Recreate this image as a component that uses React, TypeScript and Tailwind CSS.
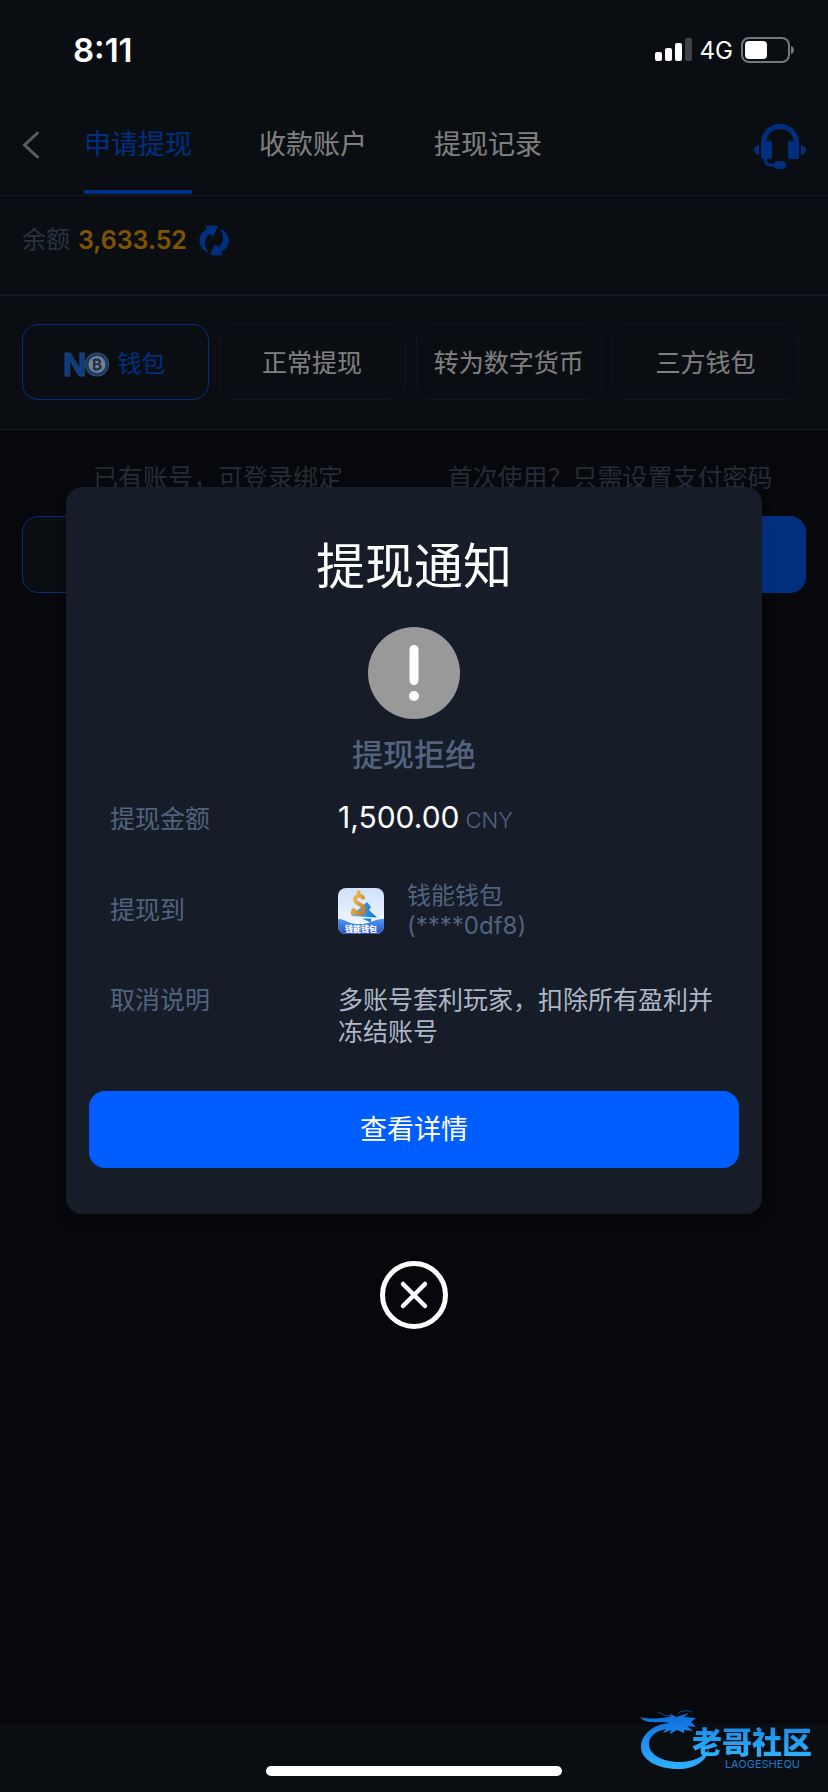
import React from 'react';
import { clsx } from 'clsx';

const tabs = ['申请提现', '收款账户', '提现记录'];
const methods = ['正常提现', '转为数字货币', '三方钱包'];

function StatusBar() {
  return (
    <div className="relative z-20 flex h-24 items-center justify-between pl-[73px] pr-[33px] pt-1 text-white">
      <span className="text-[33px] leading-10 font-semibold">8:11</span>
      <div className="flex items-center gap-2">
        <svg width="37" height="24" viewBox="0 0 37 24" fill="currentColor">
          <rect x="0" y="14" width="7" height="9" rx="2" />
          <rect x="10" y="10" width="7" height="13" rx="2" />
          <rect x="20" y="5" width="7" height="18" rx="2" />
          <rect x="30" y="0" width="7" height="23" rx="2" opacity="0.22" />
        </svg>
        <span className="pt-[2px] text-2xl">4G</span>
        <svg width="54" height="26" viewBox="0 0 54 26" fill="none">
          <rect x="1" y="1" width="47" height="24" rx="7" stroke="#74777a" strokeWidth="2" />
          <rect x="4" y="4" width="22" height="18" rx="4" fill="#fff" />
          <path d="M50 9c4 1 4 7 0 8z" fill="#74777a" />
        </svg>
      </div>
    </div>
  );
}

function HeadsetIcon() {
  return (
    <svg width="52" height="46" viewBox="0 0 52 46" fill="#005fff">
      <path
        d="M9.5 24V19.500C9.500 9.500 16.500 2.500 26 2.500S42.500 9.500 42.500 19.500V24"
        fill="none"
        stroke="#005fff"
        strokeWidth="5"
      />
      <path d="M7 19q0-2 2-2h7q2 0 2 2v14q0 2-2 2H9q-2 0-2-2zM34 19q0-2 2-2h7q2 0 2 2v14q0 2-2 2h-7q-2 0-2-2z" />
      <path d="M5 21v10C-1.500 30-1.500 22 5 21zM47 21v10c6.500-1 6.500-9 0-10z" />
      <path d="M11.500 34v2q0 5 5 5H24" fill="none" stroke="#005fff" strokeWidth="3" />
      <rect x="20" y="37" width="12" height="8" rx="4" />
    </svg>
  );
}

function RefreshIcon() {
  return (
    <svg width="30" height="31" viewBox="0 0 30 31" fill="#005fff">
      <path d="M6 .5 19 1l-5 11-3-3C5 13 4 20 9.500 27.500 2 25-1 18 1 11.500 2 8 4 6 8 4.500z" />
      <path d="M24 30.500 11 30l5-11 3 3C25 18 26 11 20.500 3.500 28 6 31 13 29 19.500 28 23 26 25 22 26.500z" />
    </svg>
  );
}

function NoLogo() {
  return (
    <svg width="44" height="25" viewBox="0 0 44 25" className="overflow-visible">
      <text x="-2" y="24" fontSize="31" className="font-bold" fill="#1a78ff" stroke="#4c8ad8" strokeWidth="0.800">
        N
      </text>
      <circle cx="32" cy="12.500" r="12" fill="#8fa4c0" />
      <circle cx="32" cy="12.500" r="9.800" fill="#fff" stroke="#1c78ee" strokeWidth="2.600" />
      <text x="32" y="18" fontSize="15" textAnchor="middle" className="font-bold" fill="#1c5fb0">
        ₿
      </text>
    </svg>
  );
}

function WalletLogo() {
  return (
    <svg width="46" height="46" viewBox="0 0 46 46" className="shrink-0 rounded-lg">
      <defs>
        <linearGradient id="sky" x1="0" y1="0" x2="0" y2="1">
          <stop offset="0" stopColor="#cfe2fb" />
          <stop offset="1" stopColor="#f8fbff" />
        </linearGradient>
        <linearGradient id="sea" x1="0" y1="0" x2="0" y2="1">
          <stop offset="0" stopColor="#4d9bf2" />
          <stop offset="1" stopColor="#2a50bd" />
        </linearGradient>
        <linearGradient id="gold" x1="0" y1="0" x2="1" y2="1">
          <stop offset="0" stopColor="#f3c469" />
          <stop offset="1" stopColor="#c9781a" />
        </linearGradient>
        <linearGradient id="sail" x1="0" y1="0" x2="1" y2="0">
          <stop offset="0" stopColor="#5cc0f7" />
          <stop offset="1" stopColor="#0d6fd6" />
        </linearGradient>
      </defs>
      <rect width="46" height="46" fill="url(#sky)" />
      <path d="M29 14 33 19 31 22 39 29.500 13 28z" fill="url(#sail)" />
      <path d="M24 30.500h9v4z" fill="#1e83dc" />
      <path
        d="M25 9.500c-3-3-8-2-8 2 0 5 9 4 9 10 0 5-7 5-10 1M20.500 4V7M14.500 25l1-3"
        fill="none"
        stroke="url(#gold)"
        strokeWidth="4"
        strokeLinecap="round"
      />
      <path d="M0 31c6-1 9 5 21 5s17-6 25-5v15H0z" fill="url(#sea)" />
      <text x="23" y="44" fontSize="8" textAnchor="middle" className="font-black" fill="#fff">
        钱能钱包
      </text>
    </svg>
  );
}

function Watermark() {
  return (
    <div className="absolute right-4 bottom-[22px] z-20 flex h-[62px] w-[172px] flex-col items-end justify-between">
      <svg width="172" height="62" viewBox="0 0 172 62" className="absolute inset-0">
        <defs>
          <linearGradient id="dragon" x1="0" y1="0" x2="0" y2="1">
            <stop offset="0" stopColor="#0b6cd8" />
            <stop offset="1" stopColor="#2fb0ff" />
          </linearGradient>
        </defs>
        <path
          d="M30 15C13 16 1 27 1 39c0 13 17 22 37 22 17 0 29-8 31-20-6 8-16 13-29 13-17 0-31-7-31-18 0-8 7-13 17-15l-3 4 8-3-1 4 7-4 7 3v-3l9 1-6-5 9 1-5-5 5-4-12-1 5-4-13 4-5-3-2 3c-7 1-17 3-29 0 4 5 12 6 23 5z"
          fill="url(#dragon)"
        />
        <path d="M18 4q6 5 14 4M38 5q6-4 14-1" stroke="#0a4a8c" strokeWidth="1" fill="none" />
      </svg>
      <span className="relative bg-linear-to-b from-[#1272d8] to-[#2fb4ff] bg-clip-text pt-[18px] text-[30px] leading-8 font-black text-transparent">
        老哥社区
      </span>
      <span className="relative pr-3 text-[11px] leading-3 text-[#1c78c8]">LAOGESHEQU</span>
    </div>
  );
}

function WithdrawNotice() {
  return (
    <div className="absolute inset-0 z-10 flex flex-col items-center justify-center bg-black/50 px-[66px] pt-6">
      <section
        role="dialog"
        aria-labelledby="notice-title"
        className="flex w-full flex-col items-center rounded-2xl bg-[#161d28] px-[23px] pt-[50px] pb-[46px] shadow-lg"
      >
        <h2 id="notice-title" className="text-[49px] leading-[60px] text-white">
          提现通知
        </h2>
        <svg width="92" height="92" viewBox="0 0 92 92" className="mt-[30px]">
          <circle cx="46" cy="46" r="46" fill="#999" />
          <rect x="41.500" y="18" width="9" height="40" rx="4.500" fill="#fff" />
          <circle cx="46" cy="69" r="5" fill="#fff" />
        </svg>
        <p className="mt-4 text-[31px] leading-10 font-medium text-[#53627f]">提现拒绝</p>

        <dl className="mt-6 flex w-full flex-col gap-[43px] pr-[21px] pl-[21px] text-[25px] text-[#53627f]">
          <div className="flex items-center">
            <dt className="w-[228px] shrink-0 leading-9">提现金额</dt>
            <dd className="flex items-baseline gap-[6px]">
              <span className="text-[30px] leading-9 text-white">1,500.00</span>
              <span className="text-[22px] leading-9 font-light">CNY</span>
            </dd>
          </div>
          <div className="flex items-center">
            <dt className="w-[228px] shrink-0">提现到</dt>
            <dd className="flex items-center gap-[23px]">
              <WalletLogo />
              <span className="text-2xl leading-[30px]">
                钱能钱包
                <br />
                (****0df8)
              </span>
            </dd>
          </div>
          <div className="flex items-start leading-8">
            <dt className="w-[228px] shrink-0">取消说明</dt>
            <dd className="text-[#aeb7c5]">多账号套利玩家，扣除所有盈利并冻结账号</dd>
          </div>
        </dl>

        <button className="mt-[43px] h-[77px] w-full rounded-2xl bg-[#005dff] pt-[2px] text-[27px] text-white">
          查看详情
        </button>
      </section>

      <button aria-label="关闭" className="mt-[47px]">
        <svg width="68" height="68" viewBox="0 0 68 68" fill="none" stroke="#fff" strokeLinecap="round">
          <circle cx="34" cy="34" r="31.500" strokeWidth="5" />
          <path d="M23 23 45 45M45 23 23 45" strokeWidth="4.500" />
        </svg>
      </button>
    </div>
  );
}

export default function App() {
  return (
    <div className="relative flex min-h-screen flex-col bg-[#0d1016] font-['Inter','Noto_Sans_CJK_SC',sans-serif]">
      <div className="bg-[#151c26]">
        <StatusBar />
        <header className="flex h-[100px] items-start border-b border-[#2a3242] pr-[22px] pl-[22px]">
          <button aria-label="返回" className="flex h-[98px] w-[62px] items-center">
            <svg width="18" height="28" viewBox="0 0 18 28" fill="none" stroke="#b4b8c0" strokeWidth="3">
              <path d="M15.500 2 2.500 14l13 12" strokeLinecap="round" />
            </svg>
          </button>
          <nav className="flex gap-[67px]">
            {tabs.map((tab, i) => (
              <a
                key={tab}
                href="#"
                className={clsx(
                  'flex h-[98px] items-center border-b-4 pt-1 text-[27px]',
                  i === 0 ? 'border-[#005fff] text-[#005fff]' : 'border-transparent text-white'
                )}
              >
                {tab}
              </a>
            ))}
          </nav>
          <button aria-label="客服" className="ml-auto flex h-[98px] items-center pt-1">
            <HeadsetIcon />
          </button>
        </header>

        <div className="flex items-center border-b-2 border-[#2a3242] px-[22px] pt-6 pb-[34px] text-[25px] leading-10">
          <span className="text-2xl leading-10 text-[#55637f]">余额</span>
          <span className="ml-2 font-semibold text-[#ffa800]">3,633.52</span>
          <button aria-label="刷新" className="ml-3">
            <RefreshIcon />
          </button>
        </div>

        <div className="grid grid-cols-4 gap-[10px] border-b border-[#2a3242] pt-7 pr-[29px] pb-[29px] pl-[22px] text-[25px] text-white">
          <button className="flex h-[76px] items-center justify-center gap-2 rounded-2xl border border-[#005fff] pt-1 text-2xl text-[#005fff]">
            <NoLogo />
            钱包
          </button>
          {methods.map((name) => (
            <button key={name} className="h-[76px] rounded-2xl border border-[#232a3a] pt-1 whitespace-nowrap">
              {name}
            </button>
          ))}
        </div>
      </div>

      <main className="grid flex-1 grid-cols-2 content-start pt-[30px] pr-[22px] pl-[22px] text-center text-[25px] leading-9 text-[#4a566e]">
        <p id="bind">已有账号，可登录绑定</p>
        <p id="create">首次使用？只需设置支付密码</p>
        <button aria-labelledby="bind" className="mt-5 mr-2 h-[77px] rounded-2xl border border-[#005fff] bg-[#151c26]" />
        <button aria-labelledby="create" className="mt-5 ml-2 h-[77px] rounded-2xl bg-[#005fff]" />
      </main>

      <footer className="flex h-[68px] items-end justify-center bg-[#151c26] pb-4">
        <div className="relative z-20 h-[10px] w-[296px] rounded-full bg-white" />
      </footer>

      <WithdrawNotice />
      <Watermark />
    </div>
  );
}
